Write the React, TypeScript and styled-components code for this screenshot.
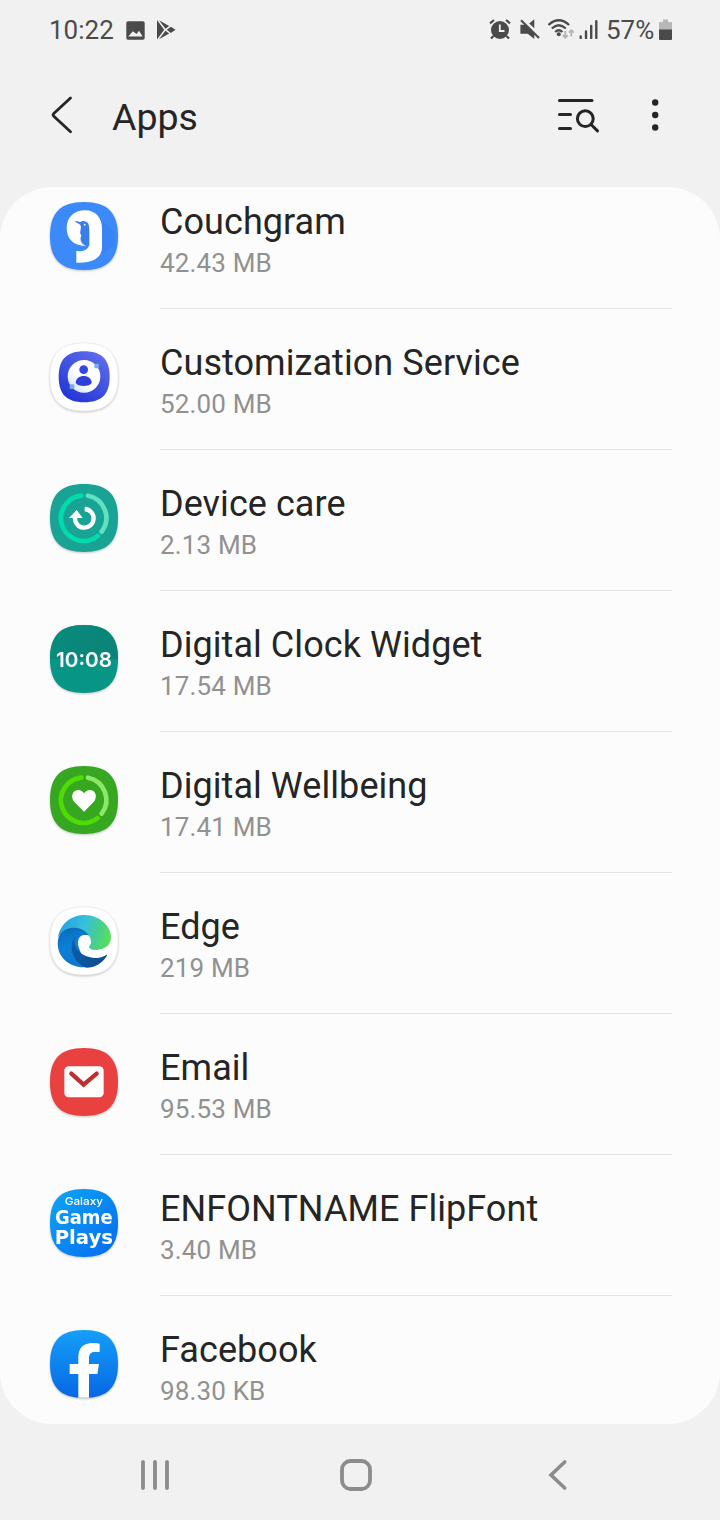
import React from "react";
import styled, { createGlobalStyle } from "styled-components";

const GlobalStyle = createGlobalStyle`
  * { box-sizing: border-box; }
  body { margin: 0; background: #f1f1f1; }
`;

const Screen = styled.div`
  width: 720px;
  height: 1520px;
  display: flex;
  flex-direction: column;
  overflow: hidden;
  background: #f1f1f1;
  font-family: Roboto, "Liberation Sans", sans-serif;
  color: #252525;
`;

const StatusBar = styled.div`
  height: 60px;
  display: flex;
  align-items: center;
  justify-content: space-between;
  padding: 0 48px 0 49px;
  color: #4a4a4a;
`;

const StatusGroup = styled.div`
  display: flex;
  align-items: center;
`;

const StatusText = styled.span<{ $width: number; $spacing: number; $gap?: number }>`
  width: ${(p) => p.$width}px;
  margin-left: ${(p) => p.$gap ?? 0}px;
  font-size: 26px;
  line-height: 30px;
  letter-spacing: ${(p) => p.$spacing}px;
  white-space: nowrap;
`;

const Glyph = styled.svg<{ $gap?: number }>`
  display: block;
  flex: none;
  margin-left: ${(p) => p.$gap ?? 0}px;
  overflow: visible;
`;

const Header = styled.header`
  height: 127px;
  display: flex;
  align-items: flex-start;
  padding: 32px 48px 0;
`;

const Title = styled.h1`
  flex: 1;
  margin: 3px 0 0 36px;
  font-size: 37.5px;
  line-height: 45px;
  font-weight: 400;
`;

const Card = styled.main`
  height: 1237px;
  border-radius: 52px;
  background: #fcfcfc;
  overflow: hidden;
`;

const List = styled.ul`
  list-style: none;
  margin: -19px 0 0;
  padding: 0;
`;

const Row = styled.li`
  height: 141px;
  display: flex;
  padding: 0 48px 0 50px;
`;

const AppIcon = styled.svg`
  display: block;
  flex: none;
  width: 68px;
  height: 68px;
  margin: 34px 42px 0 0;
  overflow: visible;
  filter: drop-shadow(0 1px 1px rgba(0, 0, 0, 0.22));
`;

const Details = styled.div`
  flex: 1;
  padding-top: 32px;
  border-bottom: 1px solid #e4e4e4;
`;

const Name = styled.div`
  font-size: 36px;
  line-height: 44px;
  letter-spacing: 0.06px;
  white-space: nowrap;
`;

const Size = styled.div`
  font-size: 26px;
  line-height: 30px;
  letter-spacing: 0.15px;
  margin-top: 4px;
  color: #919191;
`;

const NavBar = styled.nav`
  flex: 1;
  display: flex;
  align-items: center;
  padding: 6px 0 0 140px;
`;

const SQUIRCLE =
  "M0 102C0 32 32 0 102 0S204 32 204 102S172 204 102 204S0 172 0 102Z";

const Ring = ({ main, light }: { main: string; light: string }) => (
  <g fill="none" strokeWidth="14" strokeLinecap="round">
    <path d="M94 35A68 68 0 1 0 143 156" stroke={main} />
    <path d="M114 35A68 68 0 0 1 155 143" stroke={light} />
  </g>
);

const Couchgram = () => (
  <>
    <path d={SQUIRCLE} fill="#3c89fa" />
    <path d="M146 44L194 92V130L156 156Z" fill="#347fe9" opacity=".5" />
    <path d="M79 182V147C98 149 112 144 117 131L109 132C70 133 50 109 50 79C50 46 72 25 105 25C138 25 156 49 156 79V134C156 167 130 184 79 182Z" fill="#fff" />
    <path d="M74 59C82 57 86 58 90 61C96 55 110 56 115 65C119 74 118 90 118 106V131L109 133C94 126 88 114 94 100C85 92 98 76 90 68C86 64 81 62 74 59Z" fill="#3a7fe9" />
    <circle cx="104" cy="68" r="2.5" fill="#fff" />
  </>
);

const Customization = () => (
  <>
    <defs>
      <linearGradient id="customFill" x1="1" y1="0" x2="0.35" y2="1">
        <stop offset="0" stopColor="#6574ed" />
        <stop offset="1" stopColor="#2637d8" />
      </linearGradient>
      <linearGradient id="customDisc" x1="0" y1="1" x2="1" y2="0">
        <stop offset="0" stopColor="#cbd9fa" />
        <stop offset=".45" stopColor="#fff" />
      </linearGradient>
    </defs>
    <path d={SQUIRCLE} fill="#fff" stroke="#e8e8e8" strokeWidth="1.5" />
    <path d={SQUIRCLE} fill="url(#customFill)" transform="translate(26 25) scale(.75)" />
    <circle cx="102" cy="100" r="49" fill="url(#customDisc)" />
    <rect x="59" y="124" width="14" height="14" rx="4" fill="#79acf2" />
    <rect x="133" y="62" width="14" height="14" rx="4" fill="#79acf2" />
    <circle cx="101" cy="80" r="13" fill="#3346df" />
    <path d="M77 120C77 92 125 92 125 120C119 132 83 132 77 120Z" fill="#2d40dc" />
  </>
);

const DeviceCare = () => (
  <>
    <path d={SQUIRCLE} fill="#19a394" />
    <Ring main="#00dbab" light="#63e0c0" />
    <path d="M104 75A28 28 0 1 1 75 100" fill="none" stroke="#fff" strokeWidth="13" />
    <path d="M57 102L80 78L98 102Z" fill="#fff" />
  </>
);

const DigitalClock = () => (
  <>
    <defs>
      <linearGradient id="clockTop" x1="0" y1="0" x2="1" y2=".5">
        <stop offset="0" stopColor="#078c7d" />
        <stop offset="1" stopColor="#0b8377" />
      </linearGradient>
      <clipPath id="clockHalf"><rect width="204" height="102" /></clipPath>
    </defs>
    <path d={SQUIRCLE} fill="#079686" />
    <path d={SQUIRCLE} fill="url(#clockTop)" clipPath="url(#clockHalf)" />
    <text x="18" y="125" fontFamily="Inter, sans-serif" fontWeight="600" fontSize="62" fill="#fff" textLength="168" lengthAdjust="spacingAndGlyphs">10:08</text>
  </>
);

const Wellbeing = () => (
  <>
    <path d={SQUIRCLE} fill="#37a722" />
    <Ring main="#4fdc05" light="#8be868" />
    <path d="M102 137L74 109C60 94 67 73 84 72C92 72 98 76 102 82C106 76 112 72 120 72C138 73 144 94 130 109Z" fill="#fff" />
  </>
);

const Edge = () => (
  <>
    <defs>
      <linearGradient id="edgeTop" x1="0" y1=".3" x2="1" y2=".5">
        <stop offset="0" stopColor="#269fdb" />
        <stop offset=".45" stopColor="#34bfe0" />
        <stop offset=".75" stopColor="#47ce92" />
        <stop offset="1" stopColor="#57df5c" />
      </linearGradient>
      <linearGradient id="edgeLeft" x1="0" y1="0" x2=".3" y2="1">
        <stop offset="0" stopColor="#0c68b4" />
        <stop offset=".5" stopColor="#0c7fd8" />
        <stop offset="1" stopColor="#0f78cf" />
      </linearGradient>
      <linearGradient id="edgeDark" x1="0" y1="0" x2="1" y2="0">
        <stop offset="0" stopColor="#0b5ba6" />
        <stop offset="1" stopColor="#0d4b8e" />
      </linearGradient>
    </defs>
    <path d={SQUIRCLE} fill="#fff" stroke="#e8e8e8" strokeWidth="1.5" />
    <path d="M24 92C29 53 62 24 103 24C149 24 183 57 183 91C183 116 162 130 139 130C120 130 114 125 117 119C125 110 125 96 117 87C100 66 47 56 24 92Z" fill="url(#edgeTop)" />
    <path d="M24 98C34 53 95 52 117 85C91 79 79 105 87 123C95 148 111 172 126 177C70 193 16 154 24 98Z" fill="url(#edgeLeft)" />
    <path d="M76 88C66 110 82 151 137 153C150 154 161 148 169 143C173 142 172 145 169 149C156 168 134 182 110 182C74 174 50 119 76 88Z" fill="url(#edgeDark)" />
    <path d="M102 84C113 83 122 92 122 103C123 113 116 117 117 121C119 130 145 134 168 120C177 116 174 136 170 143C142 155 108 144 95 128C78 111 83 85 102 84Z" fill="#fff" />
  </>
);

const Email = () => (
  <>
    <path d={SQUIRCLE} fill="#e94040" />
    <rect x="43" y="55" width="118" height="93" rx="13" fill="#fff" />
    <path d="M64 77L101 110L140 77" fill="none" stroke="#bd302f" strokeWidth="13" strokeLinecap="round" strokeLinejoin="miter" />
  </>
);

const GamePlays = () => (
  <>
    <defs>
      <linearGradient id="gameFill" x1="0" y1="0" x2="1" y2="1">
        <stop offset="0" stopColor="#0ba7f8" />
        <stop offset="1" stopColor="#0869ed" />
      </linearGradient>
    </defs>
    <path d={SQUIRCLE} fill="url(#gameFill)" />
    <g fill="#fff" fontFamily='"DejaVu Sans", sans-serif'>
      <text x="44" y="47" fontFamily="Inter, sans-serif" fontWeight="500" fontSize="33" textLength="115" lengthAdjust="spacingAndGlyphs">Galaxy</text>
      <text x="15" y="106" fontWeight="700" fontSize="57" textLength="173" lengthAdjust="spacingAndGlyphs">Game</text>
      <text x="14" y="164" fontWeight="700" fontSize="57" textLength="175" lengthAdjust="spacingAndGlyphs">Plays</text>
    </g>
  </>
);

const Facebook = () => (
  <>
    <defs>
      <linearGradient id="facebookFill" x1="0" y1="0" x2="0" y2="1">
        <stop offset="0" stopColor="#159ff8" />
        <stop offset="1" stopColor="#0767e5" />
      </linearGradient>
    </defs>
    <path d={SQUIRCLE} fill="url(#facebookFill)" />
    <path d="M85 203V132H59V102H85V82C85 53 101 39 128 39C137 39 144 40 149 41V66H134C121 66 117 74 117 84V102H147L142 132H117V203Z" fill="#fff" />
  </>
);

const apps = [
  { name: "Couchgram", size: "42.43 MB", Icon: Couchgram },
  { name: "Customization Service", size: "52.00 MB", Icon: Customization },
  { name: "Device care", size: "2.13 MB", Icon: DeviceCare },
  { name: "Digital Clock Widget", size: "17.54 MB", Icon: DigitalClock },
  { name: "Digital Wellbeing", size: "17.41 MB", Icon: Wellbeing },
  { name: "Edge", size: "219 MB", Icon: Edge },
  { name: "Email", size: "95.53 MB", Icon: Email },
  { name: "ENFONTNAME FlipFont", size: "3.40 MB", Icon: GamePlays },
  { name: "Facebook", size: "98.30 KB", Icon: Facebook },
];

export default function App() {
  return (
    <Screen>
      <GlobalStyle />
      <StatusBar>
        <StatusGroup>
          <StatusText $width={77} $spacing={0}>10:22</StatusText>
          <Glyph width="19" height="19" viewBox="0 0 19 19">
            <path fillRule="evenodd" fill="#4a4a4a" d="M2 .3H17Q18.7.3 18.7 2V17Q18.7 18.7 17 18.7H2Q.3 18.7.3 17V2Q.3.3 2 .3ZM2.3 15.5H16.6L13 9.8L10.6 13L6.8 10.3Z" />
          </Glyph>
          <Glyph $gap={11} width="20" height="20" viewBox="0 0 20 20">
            <path d="M1 0L8.2 9.7L1 19.5ZM3 .3L13.2 6L9.5 8.8ZM3 19.3L13.2 13.6L9.5 10.8ZM14.8 6.7L19.5 9.8L14.8 12.9L10.8 9.8Z" fill="#4a4a4a" />
          </Glyph>
        </StatusGroup>
        <StatusGroup>
          <Glyph width="22" height="22" viewBox="0 0 22 22">
            <circle cx="11" cy="11" r="9" fill="#4a4a4a" />
            <path d="M1 4.3L5 1M21 4.3L17 1M4.5 17L2 19.6M17.5 17L20 19.6" stroke="#4a4a4a" strokeWidth="2.2" fill="none" />
            <path d="M10.8 5.5V12H15.5" stroke="#f1f1f1" strokeWidth="1.8" fill="none" />
          </Glyph>
          <Glyph $gap={8} width="21" height="22" viewBox="0 0 21 22">
            <path d="M1.4 5.8H6.5L15.3 14.8V20L8.7 14.8H1.4ZM10.2 4.6L15.3.3V9.3Z" fill="#4a4a4a" />
            <path d="M2 1.2L20 19" stroke="#4a4a4a" strokeWidth="2.1" />
          </Glyph>
          <Glyph $gap={7} width="27" height="22" viewBox="0 0 27 22">
            <g fill="none" stroke="#4a4a4a" strokeWidth="2.3">
              <path d="M1.5 6Q11.8-3.4 22.1 6" />
              <path d="M4.8 9.5Q11.8 3 18.8 9.5" />
              <path d="M8.2 13Q11.8 9.6 15.4 13" />
            </g>
            <circle cx="11.8" cy="15.2" r="2" fill="#4a4a4a" />
            <path d="M18.3 12V18.5M15.8 16.2L18.3 18.7L20.8 16.2M24.3 17.5V11.5M21.8 13.7L24.3 11.2L26.8 13.7" fill="none" stroke="#b4b4b4" strokeWidth="1.8" />
          </Glyph>
          <Glyph $gap={5} width="19" height="20" viewBox="0 0 19 20">
            <path d="M1.7 16.5V17.9M7 11.5V17.9M12.2 6V17.9M17.3 1.2V17.9" stroke="#4a4a4a" strokeWidth="2.4" strokeLinecap="round" />
          </Glyph>
          <StatusText $gap={8} $width={50} $spacing={0}>57%</StatusText>
          <Glyph $gap={3} width="13" height="21" viewBox="0 0 13 21">
            <path d="M4 -.5H9V2H12Q13 2 13 3V11H0V3Q0 2 1 2H4Z" fill="#b7b7b7" />
            <path d="M0 9.5H13V19Q13 20 12 20H1Q0 20 0 19Z" fill="#4a4a4a" />
          </Glyph>
        </StatusGroup>
      </StatusBar>
      <Header>
        <Glyph width="28" height="48" viewBox="0 0 28 48">
          <path d="M22.5 6L5.8 21.6Q4.5 22.9 5.8 24.2L22.5 39.8" fill="none" stroke="#252525" strokeWidth="2.8" strokeLinecap="round" />
        </Glyph>
        <Title>Apps</Title>
        <Glyph width="44" height="48" viewBox="0 0 44 48">
          <g fill="none" stroke="#252525" strokeWidth="3" strokeLinecap="round">
            <path d="M3.5 8.5H36M3.5 22.5H14.5M3.5 36.5H14.5" />
            <circle cx="29.3" cy="26.7" r="7.9" />
            <path d="M35.3 32.7L41.5 38.9" />
          </g>
        </Glyph>
        <Glyph $gap={46} width="26" height="48" viewBox="0 0 26 48">
          <g fill="#252525">
            <circle cx="9.2" cy="10.5" r="3.2" />
            <circle cx="9.2" cy="23" r="3.2" />
            <circle cx="9.2" cy="35.5" r="3.2" />
          </g>
        </Glyph>
      </Header>
      <Card>
        <List>
          {apps.map(({ name, size, Icon }) => (
            <Row key={name}>
              <AppIcon viewBox="0 0 204 204"><Icon /></AppIcon>
              <Details>
                <Name>{name}</Name>
                <Size>{size}</Size>
              </Details>
            </Row>
          ))}
        </List>
      </Card>
      <NavBar>
        <Glyph width="30" height="32" viewBox="0 0 30 32">
          <path d="M3 3V29M15 3V29M27 3V29" stroke="#8c8c8c" strokeWidth="3.8" strokeLinecap="round" />
        </Glyph>
        <Glyph $gap={170} width="32" height="32" viewBox="0 0 32 32">
          <rect x="2" y="2" width="28" height="28" rx="8.5" fill="none" stroke="#8c8c8c" strokeWidth="3.8" />
        </Glyph>
        <Glyph $gap={176} width="20" height="32" viewBox="0 0 20 32">
          <path d="M16.7 3L3 16L16.7 29" fill="none" stroke="#8c8c8c" strokeWidth="3.6" strokeLinecap="round" />
        </Glyph>
      </NavBar>
    </Screen>
  );
}
